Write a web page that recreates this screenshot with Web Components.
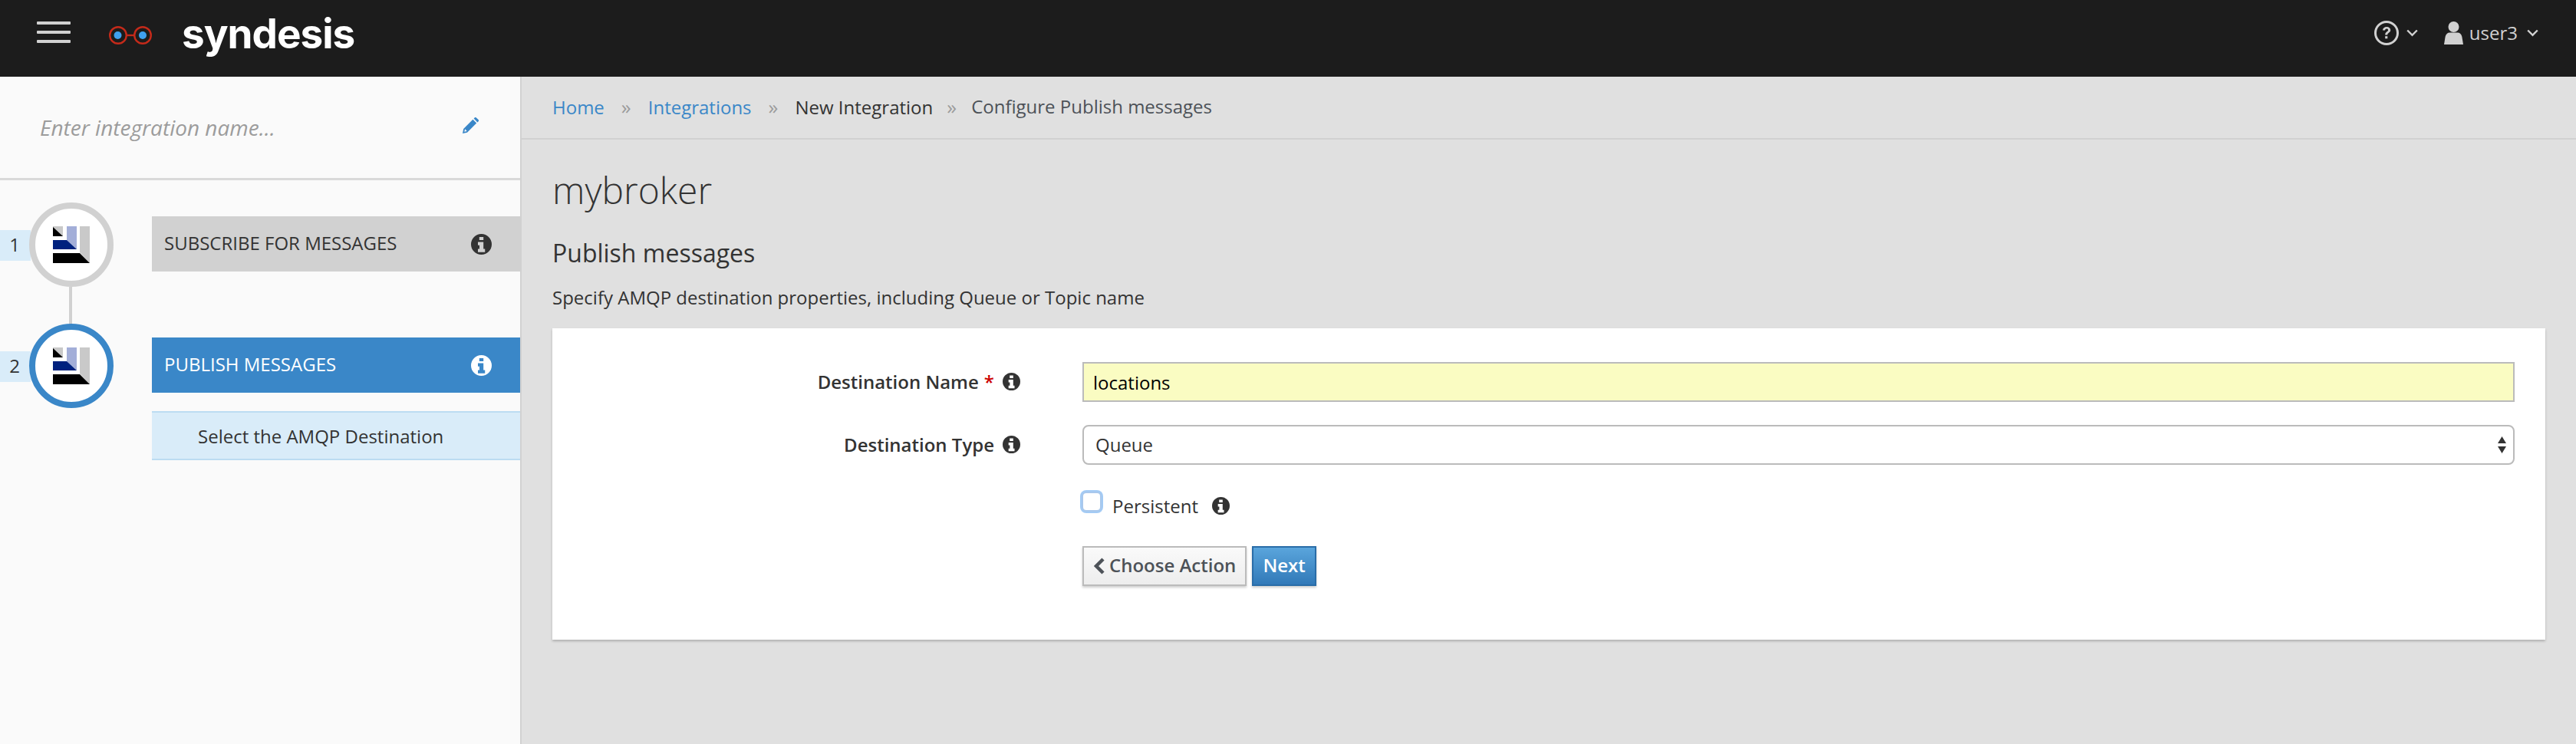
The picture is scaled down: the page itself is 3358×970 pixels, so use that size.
<!DOCTYPE html>
<html>
<head>
<meta charset="utf-8">
<title>Syndesis</title>
<style>
  html, body { margin: 0; height: 100%; }
  body { font: 24px "Open Sans", "Liberation Sans", sans-serif; color: #333; background: #e0e0e0; }
</style>
</head>
<body>
<syn-app>
  <syn-header slot="header"></syn-header>
  <syn-sidebar slot="sidebar" placeholder="Enter integration name...">
    <syn-step number="1" label="SUBSCRIBE FOR MESSAGES" connector></syn-step>
    <syn-step number="2" label="PUBLISH MESSAGES" active>
      <syn-substep>Select the AMQP Destination</syn-substep>
    </syn-step>
  </syn-sidebar>
  <syn-breadcrumb slot="main">
    <a href="#">Home</a>
    <a href="#">Integrations</a>
    <span class="dark">New Integration</span>
    <span>Configure Publish messages</span>
  </syn-breadcrumb>
  <syn-page slot="main" heading="mybroker" subheading="Publish messages" description="Specify AMQP destination properties, including Queue or Topic name">
    <syn-card>
      <syn-row label="Destination Name" required><syn-field type="text">locations</syn-field></syn-row>
      <syn-row label="Destination Type"><syn-field type="select">Queue</syn-field></syn-row>
      <syn-row><syn-check>Persistent</syn-check></syn-row>
      <syn-row><syn-actions></syn-actions></syn-row>
    </syn-card>
  </syn-page>
</syn-app>

<script>
const define = (name, html, attrs = []) => {
  const template = document.createElement('template');
  template.innerHTML = html;
  customElements.define(name, class extends HTMLElement {
    constructor() {
      super();
      this.attachShadow({mode: 'open'});
      this.shadowRoot.appendChild(template.content.cloneNode(true));
    }
    connectedCallback() {
      for(const attr of attrs) {
        const el = this.shadowRoot.querySelector(`[data-${attr}]`);
        if(el) el.textContent = this.getAttribute(attr) || '';
      }
    }
  });
};

const chevron = `<svg width="15" height="10" viewBox="0 0 15 10"><path d="M1.2 1.5 7.5 7.8 13.8 1.5" fill="none" stroke="#d1d1d1" stroke-width="2.4"/></svg>`;

define('syn-info', `
  <style>
    :host { display: inline-flex; width: var(--size, 23px); height: var(--size, 23px); color: inherit; }
    svg { width: 100%; height: 100%; fill: currentColor; }
  </style>
  <svg viewBox="0 0 24 24"><path fill-rule="evenodd" d="M12 0a12 12 0 1 0 0 24 12 12 0 0 0 0-24ZM9.6 3.6h4.8v3.6H9.6ZM8 9.4h6.4v8h1.8V21H8v-3.6h1.8v-4.4H8Z"/></svg>
`);

define('syn-app', `
  <style>
    :host { display: grid; grid-template-columns: 680px 1fr; grid-template-rows: 100px 870px; }
    .top { grid-column: 1 / 3; display: block; }
    .main { display: block; min-width: 0; }
  </style>
  <div class="top"><slot name="header"></slot></div>
  <slot name="sidebar"></slot>
  <div class="main"><slot name="main"></slot></div>
`);

define('syn-header', `
  <style>
    :host { display: flex; align-items: center; height: 100px; background: #1c1c1c; color: #d1d1d1; }
    .burger { display: flex; flex-direction: column; gap: 8px; width: 44px; margin: -16px 50px 0 48px; }
    .burger i { display: block; height: 4px; border-radius: 1px; background: #d1d1d1; }
    .glasses { margin: -8px 39px 0 0; display: block; }
    .word { font: 700 53px/60px Inter, "Open Sans", sans-serif; color: #fff; letter-spacing: -1px; width: 226px; margin-top: -12px; }
    .right { margin-left: auto; display: flex; align-items: center; margin-right: 49px; margin-top: -15px; font-size: 24px; }
    .help { display: block; margin-right: 10px; }
    .user { display: block; margin: 0 8px 0 34px; }
    .name { margin-right: 12px; line-height: 32px; }
  </style>
  <div class="burger"><i></i><i></i><i></i></div>
  <svg class="glasses" width="56" height="24" viewBox="0 0 56 24">
    <circle cx="12" cy="12" r="10.8" fill="none" stroke="#c42a1a" stroke-width="2.4"/>
    <circle cx="44" cy="12" r="10.8" fill="none" stroke="#c42a1a" stroke-width="2.4"/>
    <path d="M23 12h10" stroke="#c42a1a" stroke-width="2.4"/>
    <circle cx="11.5" cy="12" r="5" fill="#3fa0f0"/>
    <circle cx="44" cy="12" r="5" fill="#3fa0f0"/>
  </svg>
  <div class="word">syndesis</div>
  <div class="right">
    <svg class="help" width="32" height="32" viewBox="0 0 32 32">
      <circle cx="16" cy="16" r="14.5" fill="none" stroke="#d1d1d1" stroke-width="3"/>
      <path d="M11 12.6c.2-3 2.4-4.6 5.2-4.6 2.900 0 5 1.700 5 4.200 0 3.400-4 3.400-4 6.200h-3c0-4.200 3.900-4.200 3.900-6.200 0-1-.8-1.600-1.900-1.600-1.200 0-2 .7-2.200 2Z" fill="#d1d1d1"/>
      <rect x="14.200" y="20.200" width="3.100" height="3.100" fill="#d1d1d1"/>
    </svg>
    ${chevron}
    <svg class="user" width="25" height="30" viewBox="0 0 25 30">
      <circle cx="12.500" cy="7" r="7" fill="#d1d1d1"/>
      <path d="M0 30 1.600 20c.6-3.500 3-5.500 5.900-5.500h10c2.900 0 5.300 2 5.900 5.500L25 30Z" fill="#d1d1d1"/>
    </svg>
    <span class="name">user3</span>
    ${chevron}
  </div>
`);

define('syn-sidebar', `
  <style>
    :host { display: block; background: #fafafa; border-right: 2px solid #d1d1d1; height: 870px; box-sizing: border-box; }
    .name { display: flex; align-items: center; justify-content: space-between; height: 132px; padding: 0 54px 0 52px; border-bottom: 3px solid #d9d9d9; box-sizing: content-box; }
    .placeholder { font-style: italic; color: #9c9c9c; font-size: 28px; margin-top: 0; }
    svg { display: block; margin-top: -6px; }
    .steps { padding-top: 29px; }
  </style>
  <div class="name">
    <span class="placeholder" data-placeholder></span>
    <svg width="21" height="21" viewBox="0 0 21 21"><path fill="#3a87c8" fill-rule="evenodd" d="M14.600 1.600 16.200 0c.7-.2 1.200 0 1.700.4l2.700 2.700c.5.5.6 1.100.3 1.800l-1.500 1.500ZM13.400 2.800 18.200 7.600 6 19.800 0 21l1.200-6ZM3.100 15.200l-.8 3.500 3.500-.8Z"/></svg>
  </div>
  <div class="steps"><slot></slot></div>
`, ['placeholder']);

define('syn-step', `
  <style>
    :host { display: flex; height: 158px; align-items: flex-start; --ring: #d1d1d1; --bar: #d1d1d1; --bar-text: #333; --info: #333; }
    :host([active]) { --ring: #3a87c8; --bar: #3a87c8; --bar-text: #fff; --info: #fff; }
    .num { width: 40px; height: 40px; margin-top: 36px; line-height: 38px; background: #d9ecf9; font-size: 24px; text-align: center; box-sizing: border-box; padding-right: 2px; }
    .circle { position: relative; box-sizing: border-box; flex: none; width: 110px; height: 110px; margin: 0 50px 0 -2px; border: 8px solid var(--ring); border-radius: 50%; background: #fff; display: flex; align-items: center; justify-content: center; }
    :host([connector]) .circle::after { content: ""; position: absolute; left: 44px; top: 102px; width: 4px; height: 50px; background: #d1d1d1; }
    .body { flex: 1; min-width: 0; margin-top: 18px; }
    .bar { display: flex; align-items: center; justify-content: space-between; height: 72px; padding: 0 37px 0 16px; background: var(--bar); color: var(--bar-text); }
    .label { margin-top: -4px; }
    syn-info { --size: 27px; color: var(--info); }
    svg { display: block; }
  </style>
  <div class="num" data-number></div>
  <div class="circle">
    <svg width="48" height="48" viewBox="0 0 48 48">
      <path fill="#c9c9c9" d="M0 0h13v13H0ZM35 0h13v48L35 34Z"/>
      <path fill="#000" d="M0 1 13 13H0ZM0 35h35l13 13H0Z"/>
      <path fill="#a3aed8" d="M18 0h13v30L18 18Z"/>
      <path fill="#00217e" d="M0 18h18l13 12H0Z"/>
    </svg>
  </div>
  <div class="body">
    <div class="bar"><span class="label" data-label></span><syn-info></syn-info></div>
    <slot></slot>
  </div>
`, ['number', 'label']);

define('syn-substep', `
  <style>
    :host { display: flex; align-items: center; box-sizing: border-box; height: 64px; margin-top: 24px; padding-left: 60px; background: #d9ecf9; border-top: 2px solid #bcdcf2; border-bottom: 2px solid #bcdcf2; }
  </style>
  <slot></slot>
`);

define('syn-breadcrumb', `
  <style>
    :host { display: flex; align-items: center; box-sizing: border-box; height: 82px; padding: 0 40px 3px; border-bottom: 2px solid #d1d1d1; color: #4d5258; }
    ::slotted(a) { color: #3a87c8; text-decoration: none; }
    ::slotted(.dark) { color: #333; }
    ::slotted(*:not(:last-child))::after { content: "»"; color: #9c9c9c; margin: 0 22px; font-size: 26px; display: inline-block; }
    ::slotted(.dark)::after { margin: 0 19px 0 18px; }
  </style>
  <slot></slot>
`);

define('syn-page', `
  <style>
    :host { display: block; padding: 0 40px; }
    h1 { font: 300 48px/60px "Open Sans", sans-serif; margin: 36px 0 0; color: #333; }
    h2 { font: 400 32px/40px "Open Sans", sans-serif; margin: 32px 0 0; color: #333; }
    p { font-size: 24px; line-height: 32px; margin: 22px 0 0; }
    .content { margin-top: 24px; }
  </style>
  <h1 data-heading></h1>
  <h2 data-subheading></h2>
  <p data-description></p>
  <div class="content"><slot></slot></div>
`, ['heading', 'subheading', 'description']);

define('syn-card', `
  <style>
    :host { display: block; background: #fff; height: 406px; box-sizing: border-box; padding: 44px 40px 0 0; box-shadow: 0 2px 3px rgba(0,0,0,.22); }
  </style>
  <slot></slot>
`);

define('syn-row', `
  <style>
    :host { display: grid; grid-template-columns: 610px 1fr; column-gap: 81px; align-items: center; margin-bottom: 30px; }
    .label { display: flex; justify-content: flex-end; align-items: center; gap: 8px; font-weight: 600; min-height: 1px; margin-top: -1px; }
    .req { display: none; color: #c00; margin-left: -1px; }
    :host([required]) .req { display: inline; }
    syn-info { display: none; margin-left: 3px; }
    :host([label]) syn-info { display: inline-flex; }
    .text { white-space: nowrap; }
  </style>
  <div class="label"><span class="text" data-label></span><span class="req">*</span><syn-info></syn-info></div>
  <div><slot></slot></div>
`, ['label']);

define('syn-field', `
  <style>
    :host { display: flex; align-items: center; justify-content: space-between; box-sizing: border-box; height: 52px; padding: 0 9px 0 12px; border: 2px solid #bbb; background: #fafcc2; color: #000; }
    :host([type=select]) { background: #fff; border-radius: 8px; color: #333; padding-left: 15px; }
    :host([type=select]) span { margin-top: -2px; }
    svg { display: none; }
    :host([type=select]) svg { display: block; }
  </style>
  <span><slot></slot></span>
  <svg width="11" height="22" viewBox="0 0 11 22"><path fill="#333" d="M5.500 0 11 9H0ZM0 13h11l-5.500 9Z"/></svg>
`);

define('syn-check', `
  <style>
    :host { display: flex; align-items: center; height: 46px; box-sizing: border-box; }
    .box { box-sizing: border-box; flex: none; width: 26px; height: 26px; margin: -10px 14px 0 -1px; border: 2px solid #a9c8ec; border-radius: 6px; background: #fff; box-shadow: 0 0 0 2px #a3cbf5; }
    syn-info { margin-left: 18px; }
  </style>
  <span class="box"></span><slot></slot><syn-info></syn-info>
`);

define('syn-actions', `
  <style>
    :host { display: flex; gap: 7px; font-weight: 600; }
    .btn { box-sizing: border-box; height: 52px; display: flex; align-items: center; border: 2px solid #bbb; padding: 0 12px 3px; background: linear-gradient(#fafafa, #ededed); color: #4d5258; box-shadow: 0 2px 3px rgba(0,0,0,.2); }
    .next { background: linear-gradient(#5aa5dc, #3179b8); border-color: #2a6da8; color: #fff; }
    svg { display: block; margin-right: 6px; margin-top: 3px; }
  </style>
  <div class="btn"><svg width="15" height="22" viewBox="0 0 15 22"><path fill="none" stroke="#4d5258" stroke-width="4.500" d="M13 2 4 11l9 9"/></svg>Choose Action</div>
  <div class="btn next">Next</div>
`);
</script>
</body>
</html>
